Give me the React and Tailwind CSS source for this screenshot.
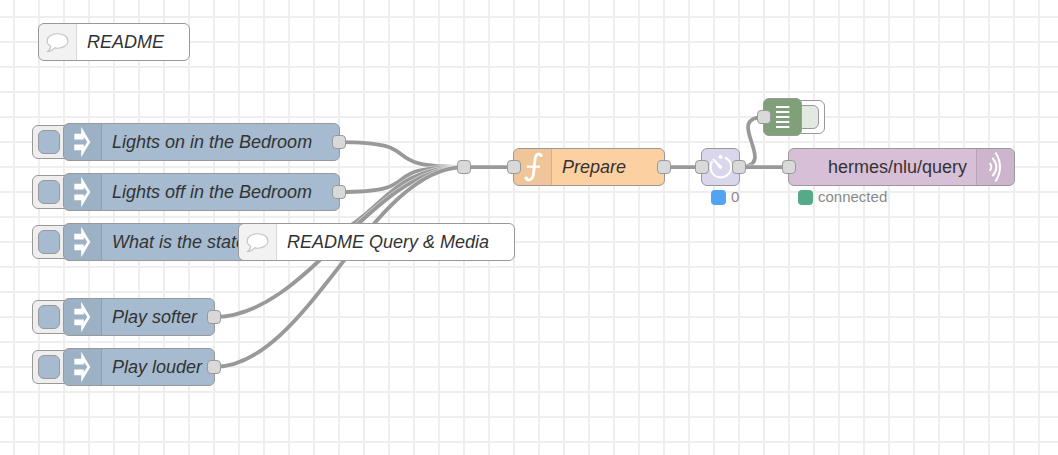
const NODE_COLORS = {
  inject: 'bg-[#a6bbcf]',
  comment: 'bg-white',
  func: 'bg-[#fdd0a2]',
  delay: 'bg-[#dad6ec]',
  debug: 'bg-[#87a980]',
  mqtt: 'bg-[#d8bfd8]',
};

function InjectIcon() {
  return (
    <svg viewBox="0 0 37 36" className="h-9 w-full" fill="white" aria-hidden="true">
      <path d="M10.3 9.700H17.2V2.700L26.300 18L17.2 33.300V26.300H10.3V20.600H19.800V22.900L23.400 18L19.800 13.100V15.400H10.3Z" />
    </svg>
  );
}

function CommentIcon() {
  return (
    <svg viewBox="0 0 37 36" className="h-9 w-full" fill="white" stroke="#c4c4c4" strokeWidth="1.1" strokeLinejoin="round" aria-hidden="true">
      <path d="M18.500 9.800C24.500 9.800 29 12.800 29 16.900C29 20.900 24.500 24.200 18.500 24.200C17.500 24.200 16.500 24.100 15.500 23.900C14 26 11.500 27.300 8.200 27.800C10.600 26.500 11.500 25 11.800 22.400C9.500 21 8.200 19 8.200 16.900C8.200 12.800 12.500 9.800 18.500 9.800Z" />
    </svg>
  );
}

function FunctionIcon() {
  return (
    <svg viewBox="0 0 37 36" className="h-9 w-full" fill="none" stroke="white" aria-hidden="true">
      <path d="M27 6.500C26.500 4.600 22.200 4 21.200 9C20.600 13 20.200 22 19 27C17.800 31.800 12.700 31.700 12.200 29" strokeWidth="2.8" />
      <path d="M12.700 17.700H26" strokeWidth="2.2" />
      <circle cx="27" cy="6.500" r="1.600" fill="white" stroke="none" />
      <circle cx="12.300" cy="29.200" r="1.700" fill="white" stroke="none" />
    </svg>
  );
}

function DelayIcon() {
  return (
    <svg viewBox="0 0 37 36" className="h-9 w-full" fill="none" stroke="white" strokeWidth="1.900" aria-hidden="true">
      <path d="M22.800 8.400A10.400 10.400 0 1 1 10.400 12" />
      <circle cx="18.500" cy="8" r="2" fill="white" stroke="none" />
      <path d="M10.300 10.300L11.500 9.500L19.800 16.900A1.700 1.700 0 1 1 17.300 19.200Z" fill="white" stroke="none" />
    </svg>
  );
}

function DebugIcon() {
  return (
    <svg viewBox="0 0 37 36" className="h-9 w-full" stroke="white" strokeWidth="2.100" aria-hidden="true">
      <path d="M12 8h13.300M12 13h13.300M12 18h13.300M12 23h13.300M12 28h13.300" />
    </svg>
  );
}

function BridgeIcon() {
  return (
    <svg viewBox="0 0 37 36" className="h-9 w-full" fill="none" stroke="white" strokeWidth="2" aria-hidden="true">
      <path d="M12.800 14Q15.800 18 12.800 22M15.300 8.800Q23.500 18 15.300 27.200M18.500 3.500Q27.500 18 18.500 32.500" />
    </svg>
  );
}

function Port({ side }) {
  const edge = side === 'in' ? '-left-[7px]' : '-right-[7px]';
  return (
    <span className={`absolute top-[11px] ${edge} size-[14px] rounded-[4px] border border-[#999] bg-[#d9d9d9]`} />
  );
}

function IconCell({ children, side = 'left' }) {
  const rule = side === 'left' ? 'border-r rounded-l-[5px]' : 'border-l rounded-r-[5px]';
  return (
    <span className={`flex w-[38px] shrink-0 items-center border-black/10 bg-black/5 ${rule}`}>
      {children}
    </span>
  );
}

function Node({ place, color, children }) {
  return (
    <div className={`absolute flex h-[38px] rounded-[6px] border border-[#999] ${color} ${place}`}>
      {children}
    </div>
  );
}

function Label({ children }) {
  return <span className="self-center pl-[10px] text-[18px] leading-6 whitespace-nowrap text-[#333] italic">{children}</span>;
}

function InjectNode({ place, width, label }) {
  return (
    <div className={`absolute ${place}`}>
      <button
        type="button"
        aria-label={`Inject ${label}`}
        className="mt-0.5 flex h-[34px] w-10 rounded-[6px] border border-[#999] bg-[#eee] px-[5px] py-1"
      >
        <span className="h-6 w-[22px] rounded-[6px] border border-[#999] bg-[#a6bbcf]" />
      </button>
      <Node place={`top-0 left-[31px] ${width}`} color={NODE_COLORS.inject}>
        <IconCell><InjectIcon /></IconCell>
        <Label>{label}</Label>
        <Port side="out" />
      </Node>
    </div>
  );
}

function CommentNode({ place, label }) {
  return (
    <Node place={place} color={NODE_COLORS.comment}>
      <IconCell><CommentIcon /></IconCell>
      <Label>{label}</Label>
    </Node>
  );
}

function Status({ place, color, children }) {
  return (
    <div className={`absolute flex items-center gap-[5px] text-[15px] leading-5 text-[#888] ${place}`}>
      <span className={`size-[15px] rounded-[4px] ${color}`} />
      {children}
    </div>
  );
}

const WIRES = [
  'M339 142C433 142 370 167 464 167',
  'M339 192C433 192 370 167 464 167',
  'M289 242C383 242 370 167 464 167',
  'M214 317C308 317 370 167 464 167',
  'M214 367C308 367 370 167 464 167',
  'M464 167H514',
  'M664 167H701',
  'M739 167C781 167 722 117 764 117',
  'M739 167H789',
];

function Wires() {
  return (
    <svg className="pointer-events-none absolute top-0 left-0 h-full w-full" fill="none" aria-hidden="true">
      {WIRES.map((d) => (
        <g key={d}>
          <path d={d} stroke="white" strokeOpacity="0.6" strokeWidth="5" />
          <path d={d} stroke="#999" strokeWidth="3.75" />
        </g>
      ))}
    </svg>
  );
}

export default function App() {
  return (
    <main className="relative min-h-screen w-full overflow-hidden bg-white bg-[linear-gradient(to_right,#eee_2px,transparent_2px),linear-gradient(to_bottom,#eee_2px,transparent_2px)] bg-[size:25px_25px] bg-[position:13px_16px] font-['Liberation_Sans',Arial,sans-serif]">
      <Wires />

      <CommentNode place="top-[23px] left-[38px] w-[152px]" label="README" />

      <InjectNode place="top-[123px] left-[32px]" width="w-[277px]" label="Lights on in the Bedroom" />
      <InjectNode place="top-[173px] left-[32px]" width="w-[277px]" label="Lights off in the Bedroom" />
      <InjectNode place="top-[223px] left-[32px]" width="w-[227px]" label="What is the state" />
      <InjectNode place="top-[298px] left-[32px]" width="w-[152px]" label="Play softer" />
      <InjectNode place="top-[348px] left-[32px]" width="w-[152px]" label="Play louder" />

      <CommentNode place="top-[223px] left-[238px] w-[277px]" label="README Query & Media" />

      <span className="absolute top-[160px] left-[457px] size-[14px] rounded-[4px] border border-[#999] bg-[#d9d9d9]" />

      <Node place="top-[148px] left-[513px] w-[152px]" color={NODE_COLORS.func}>
        <IconCell><FunctionIcon /></IconCell>
        <Label>Prepare</Label>
        <Port side="in" />
        <Port side="out" />
      </Node>

      <Node place="top-[148px] left-[701px] w-[39px]" color={NODE_COLORS.delay}>
        <DelayIcon />
        <Port side="in" />
        <Port side="out" />
      </Node>
      <Status place="top-[187px] left-[711px]" color="bg-[#53a3f3]">0</Status>

      <button
        type="button"
        aria-label="Toggle debug output"
        className="absolute top-[100px] left-[785px] flex h-[34px] w-10 justify-end rounded-[6px] border border-[#999] bg-white px-[5px] py-1"
      >
        <span className="h-6 w-[22px] rounded-[6px] border border-[#999] bg-[#e2e9e0]" />
      </button>
      <Node place="top-[98px] left-[763px] w-[39px]" color={NODE_COLORS.debug}>
        <span className="flex w-full items-center rounded-[5px] bg-black/5"><DebugIcon /></span>
        <Port side="in" />
      </Node>

      <Node place="top-[148px] left-[788px] w-[227px]" color={NODE_COLORS.mqtt}>
        <span className="flex-1 self-center pr-[9px] text-right text-[18px] leading-6 text-[#333]">hermes/nlu/query</span>
        <IconCell side="right"><BridgeIcon /></IconCell>
        <Port side="in" />
      </Node>
      <Status place="top-[187px] left-[798px]" color="bg-[#55aa88]">connected</Status>
    </main>
  );
}
